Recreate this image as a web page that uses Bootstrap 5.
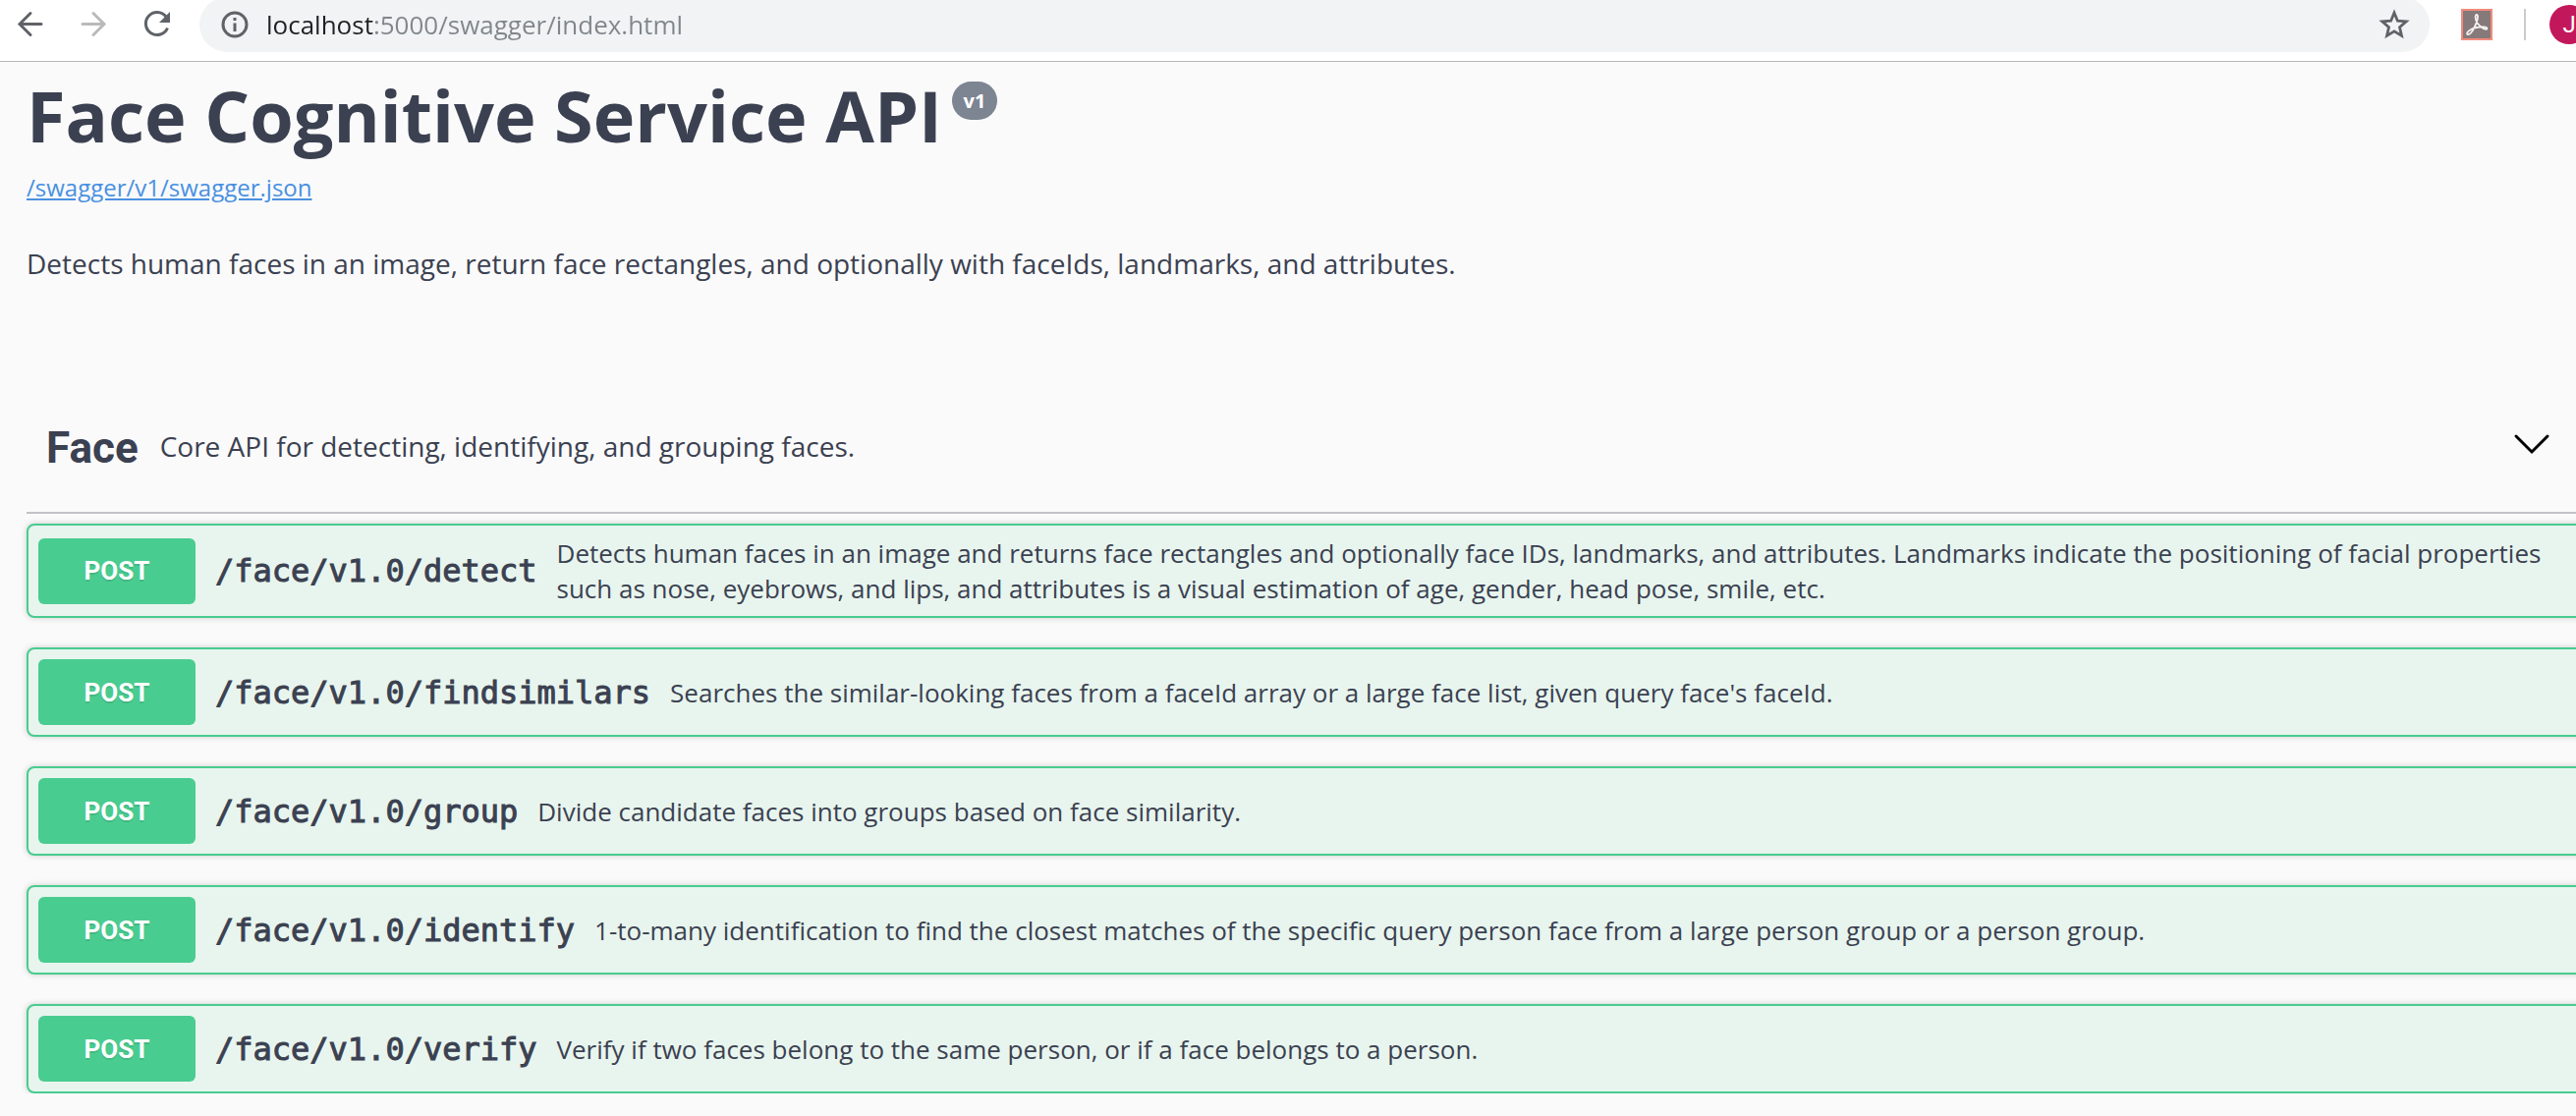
<!DOCTYPE html>
<html lang="en">
<head>
<meta charset="utf-8">
<meta name="viewport" content="width=device-width, initial-scale=1">
<title>Swagger UI</title>
<link href="https://cdn.jsdelivr.net/npm/bootstrap@5.3.0/dist/css/bootstrap.min.css" rel="stylesheet">
<style>
body{background:#fafafa;color:#3b4151;font-family:"Open Sans","Noto Sans",sans-serif;font-size:28px;line-height:40px;overflow-x:hidden}
.browser-bar{height:63px;background:#fff;border-bottom:1px solid #b3b5b6;padding-left:16px;overflow:hidden}
.browser-bar svg{display:block;flex:none}
.tool-group{gap:32px;padding:8px 27px 0 0}
.tool-btn{border:0;padding:0;background:none;width:32px;height:32px}
.omnibox{height:56px;margin-top:-3px;border-radius:28px;background:#f1f3f4;padding:0 20px 0 22px}
.url-field{border:0;outline:0;padding:0;margin-left:18px;font-family:"Open Sans",sans-serif;font-size:26px;line-height:36px;height:36px;color:transparent;background:linear-gradient(90deg,#202124 110px,#80868b 110px);-webkit-background-clip:text;background-clip:text}
.ext-icon{margin:9px 32px 0 32px}
.bar-rule{width:2px;height:32px;margin-top:9px;background:#ccc}
.avatar{width:40px;height:40px;border-radius:50%;background:#c2185b;color:#fff;font-family:Roboto,sans-serif;font-size:24px;line-height:40px;margin:5px -13px 0 24px;padding:0}
.api-page{padding:18px 0 0 27px;margin-right:-14px}
.title-row{gap:10px}
.api-title{font-size:72px;line-height:72px;font-weight:700;margin:0}
.ver-pill{background:#7d8492;border-radius:20px;width:46px;height:39px;font-size:20px;line-height:39px;font-weight:700;color:#fff;margin-top:2px}
.spec-link{display:inline-block;margin-top:22px;font-size:24px;line-height:32px;color:#4990e2}
.api-about{margin:39px 0 99px}
.tag-head{gap:22px;padding:47px 40px 47px 20px;border-bottom:2px solid #c1c1c9;margin-bottom:10px}
.tag-name{font-family:Roboto,sans-serif;font-weight:700;font-size:44px;line-height:44px;margin:0 0 -4px}
.op-list{display:grid;gap:30px}
.op{min-height:91px;border:2px solid #49cc90;border-radius:8px;background:#e8f5ee;box-shadow:0 0 6px rgba(0,0,0,.19);padding:10px 40px 10px 10px;gap:20px}
.op-method{width:160px;height:67px;flex:none;border:0;border-radius:6px;background:#49cc90;color:#fff;font-family:Roboto,sans-serif;font-size:26px;font-weight:700;text-shadow:0 2px 0 rgba(0,0,0,.1)}
.op-path{font-family:"DejaVu Sans Mono",monospace;font-size:32px;color:#3b4151;-webkit-text-stroke:1px #3b4151;text-decoration:none;white-space:nowrap}
.op-text{font-size:26px;line-height:36px}
</style>
<script src="https://cdn.jsdelivr.net/npm/bootstrap@5.3.0/dist/js/bootstrap.bundle.min.js"></script>
</head>
<body>
<header class="browser-bar d-flex align-items-start">
  <div class="tool-group d-flex">
    <button class="tool-btn" aria-label="Back"><svg width="32" height="32" viewBox="0 0 32 32" fill="none" stroke="#5f6368" stroke-width="3" stroke-linecap="round"><path d="M26 16.500H4M15 5.500 4 16.500 15 27.500"/></svg></button>
    <button class="tool-btn" aria-label="Forward"><svg width="32" height="32" viewBox="0 0 32 32" fill="none" stroke="#bababa" stroke-width="3" stroke-linecap="round"><path d="M4 16.500h22M15 5.500 26 16.500 15 27.500"/></svg></button>
    <button class="tool-btn" aria-label="Reload"><svg width="32" height="32" viewBox="0 0 32 32"><path d="M25 9A11.500 11.500 0 1 0 26.500 20.500" fill="none" stroke="#5f6368" stroke-width="3"/><path d="M29 4v11H18z" fill="#5f6368"/></svg></button>
  </div>
  <div class="omnibox d-flex align-items-center flex-grow-1">
    <svg width="28" height="28" viewBox="0 0 28 28"><circle cx="14" cy="14" r="12" fill="none" stroke="#5f6368" stroke-width="3"/><path d="M12.500 12.500h3V21h-3zM12.500 7h3v3h-3z" fill="#5f6368"/></svg>
    <input class="url-field flex-grow-1" type="text" aria-label="Address" value="localhost:5000/swagger/index.html">
    <button class="border-0 bg-transparent p-0" aria-label="Bookmark"><svg width="32" height="32" viewBox="0 0 32 32"><path d="M16 4l3.400 8.200 8.800.7-6.700 5.800 2 8.700L16 22.800l-7.500 4.600 2-8.700-6.700-5.800 8.800-.7z" fill="none" stroke="#5f6368" stroke-width="2.800"/></svg></button>
  </div>
  <svg class="ext-icon" width="32" height="32" viewBox="0 0 32 32"><path d="M1 1h30v30H1z" fill="#857979" stroke="#f28b7d" stroke-width="2"/><path d="M6.500 26c-2-2 4-6 9-7 5-1 11-1 11 1s-6 0-9.500-5c-3-4-3-9-1-9s1 6-2 12c-2 5-5.500 9-7.500 8z" fill="none" stroke="#f4f1f1" stroke-width="1.800"/></svg>
  <span class="bar-rule"></span>
  <button class="avatar border-0 flex-shrink-0" aria-label="Profile">J</button>
</header>
<main class="api-page">
  <div class="title-row d-flex align-items-start">
    <h1 class="api-title">Face Cognitive Service API</h1>
    <span class="ver-pill text-center">v1</span>
  </div>
  <a class="spec-link" href="#">/swagger/v1/swagger.json</a>
  <p class="api-about">Detects human faces in an image, return face rectangles, and optionally with faceIds, landmarks, and attributes.</p>
  <section>
    <div class="tag-head d-flex align-items-center">
      <h2 class="tag-name">Face</h2>
      <span>Core API for detecting, identifying, and grouping faces.</span>
      <button class="border-0 bg-transparent p-0 ms-auto" aria-label="Collapse"><svg class="d-block" width="38" height="38" viewBox="0 0 38 38"><path d="M3 9l16 16 16-16" fill="none" stroke="#000" stroke-width="3" stroke-linecap="round"/></svg></button>
    </div>
    <div class="op-list">
      <div class="op d-flex align-items-center"><button class="op-method">POST</button><a class="op-path" href="#">/face/v1.0/detect</a><div class="op-text">Detects human faces in an image and returns face rectangles and optionally face IDs, landmarks, and attributes. Landmarks indicate the positioning of facial properties such as nose, eyebrows, and lips, and attributes is a visual estimation of age, gender, head pose, smile, etc.</div></div>
      <div class="op d-flex align-items-center"><button class="op-method">POST</button><a class="op-path" href="#">/face/v1.0/findsimilars</a><div class="op-text">Searches the similar-looking faces from a faceId array or a large face list, given query face's faceId.</div></div>
      <div class="op d-flex align-items-center"><button class="op-method">POST</button><a class="op-path" href="#">/face/v1.0/group</a><div class="op-text">Divide candidate faces into groups based on face similarity.</div></div>
      <div class="op d-flex align-items-center"><button class="op-method">POST</button><a class="op-path" href="#">/face/v1.0/identify</a><div class="op-text">1-to-many identification to find the closest matches of the specific query person face from a large person group or a person group.</div></div>
      <div class="op d-flex align-items-center"><button class="op-method">POST</button><a class="op-path" href="#">/face/v1.0/verify</a><div class="op-text">Verify if two faces belong to the same person, or if a face belongs to a person.</div></div>
    </div>
  </section>
</main>
</body>
</html>
